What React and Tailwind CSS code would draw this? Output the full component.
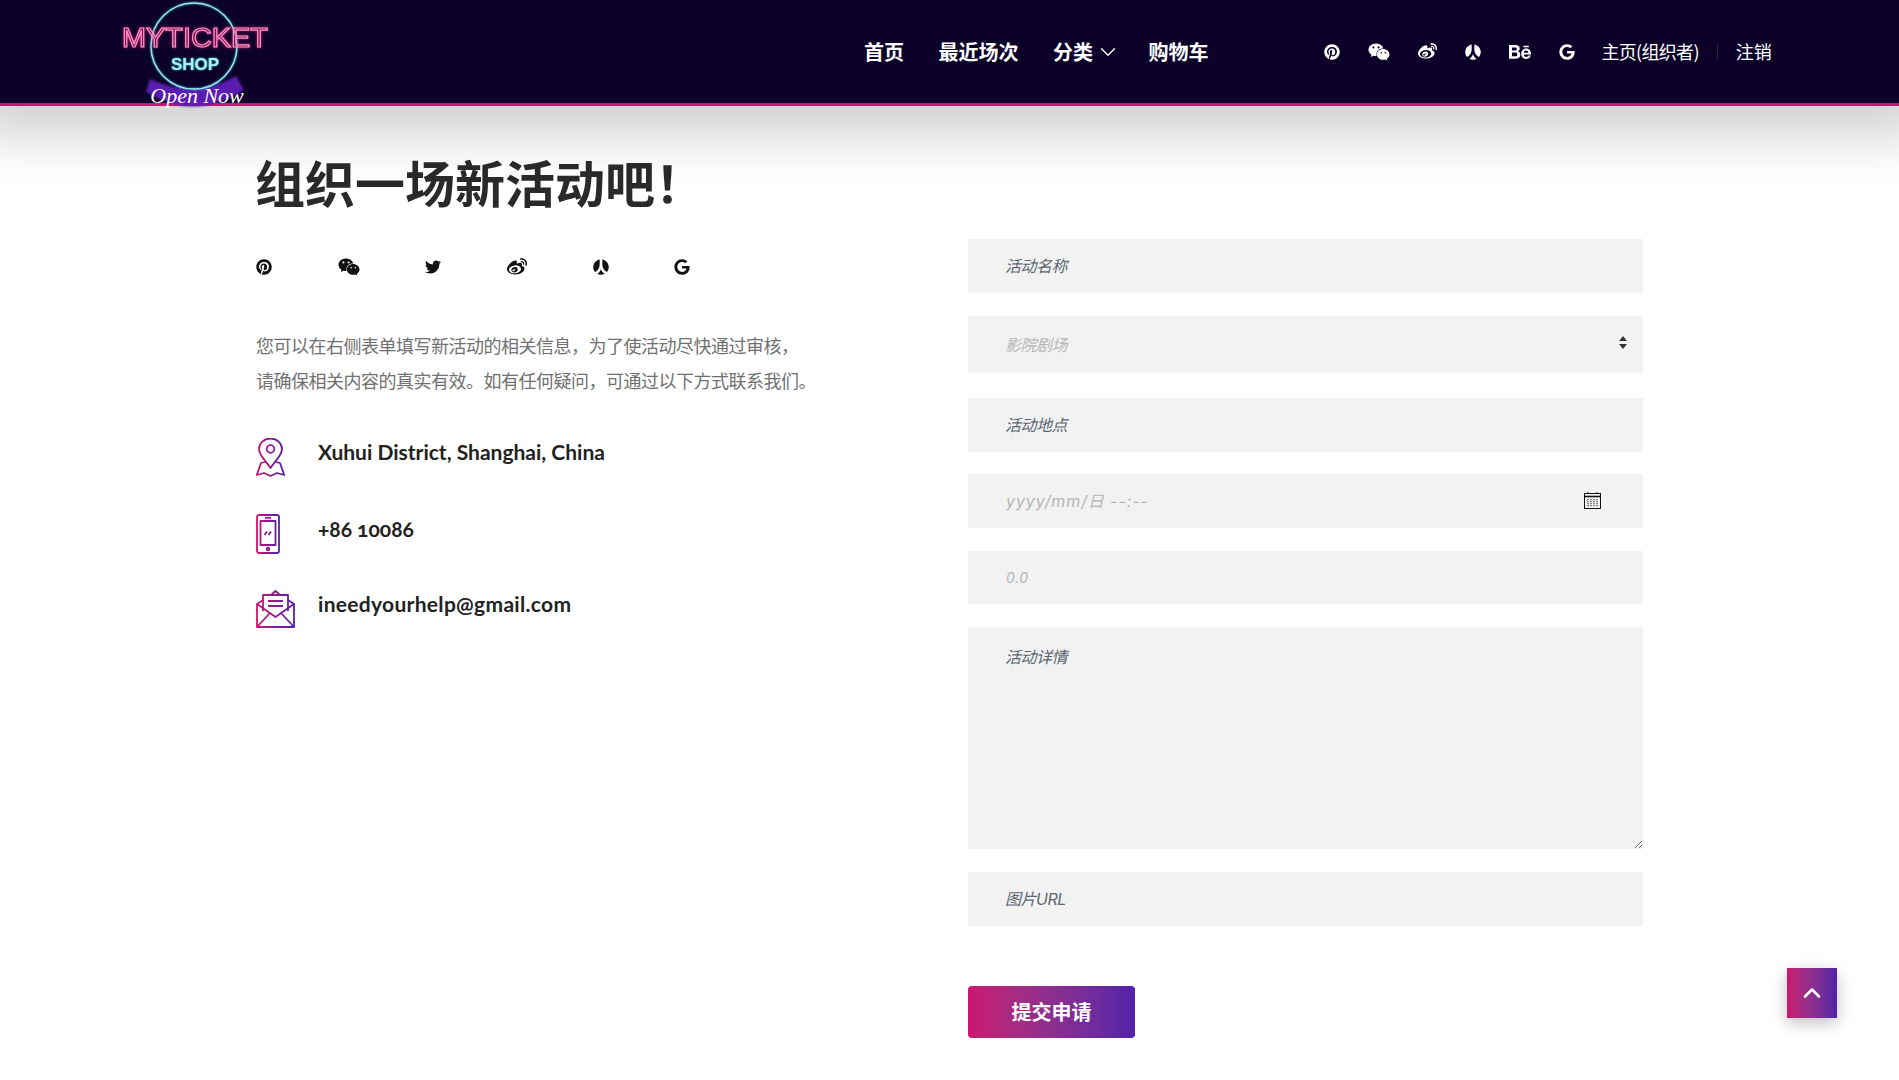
import { FaPinterest, FaWeixin, FaTwitter, FaWeibo, FaRenren, FaGoogle, FaBehance } from 'react-icons/fa'
import { ChevronDown, ChevronUp } from 'lucide-react'

const headerIcons = [
  { Icon: FaPinterest, size: 16 },
  { Icon: FaWeixin, size: 22 },
  { Icon: FaWeibo, size: 19 },
  { Icon: FaRenren, size: 16 },
  { Icon: FaBehance, size: 22 },
  { Icon: FaGoogle, size: 16 },
]

const socialIcons = [
  { Icon: FaPinterest, size: 16 },
  { Icon: FaWeixin, size: 22 },
  { Icon: FaTwitter, size: 16 },
  { Icon: FaWeibo, size: 20 },
  { Icon: FaRenren, size: 16 },
  { Icon: FaGoogle, size: 16 },
]

function Logo() {
  return (
    <svg width="150" height="110" viewBox="0 0 150 110" className="relative z-10 shrink-0">
      <defs>
        <filter id="pinkGlow" x="-20%" y="-40%" width="140%" height="180%">
          <feDropShadow dx="0" dy="0" stdDeviation="1.5" floodColor="#ff1f86" />
        </filter>
        <filter id="blueGlow" x="-20%" y="-20%" width="140%" height="140%">
          <feDropShadow dx="0" dy="0" stdDeviation="1.3" floodColor="#2fc8e0" />
        </filter>
        <filter id="soft" x="-20%" y="-40%" width="140%" height="180%">
          <feGaussianBlur stdDeviation="1.2" />
        </filter>
      </defs>
      <path d="M30 79 Q74 100 116 76 L124 90 Q74 122 26 92 Z" fill="#5a1fb0" filter="url(#soft)" />
      <circle cx="74" cy="46" r="43" fill="none" stroke="#9be6ee" strokeWidth="1.4" filter="url(#blueGlow)" />
      <text x="75" y="47" textAnchor="middle" textLength="146" lengthAdjust="spacingAndGlyphs" fontFamily="Liberation Sans, sans-serif" fontSize="28" fill="none" stroke="#ff8fc4" strokeWidth="1.2" filter="url(#pinkGlow)">MYTICKET</text>
      <text x="75" y="70" textAnchor="middle" fontFamily="Liberation Sans, sans-serif" fontWeight="700" fontSize="17" fill="#a8f0f5" filter="url(#blueGlow)">SHOP</text>
      <text x="77" y="103" textAnchor="middle" fontFamily="Liberation Serif, serif" fontStyle="italic" fontSize="22" fill="#ffffff">Open Now</text>
    </svg>
  )
}

function PinIcon() {
  return (
    <svg width="29" height="39" viewBox="0 0 29 39" fill="none" stroke="url(#pin2)" strokeWidth="1.8" strokeLinejoin="round">
      <defs>
        <linearGradient id="pin2" gradientUnits="userSpaceOnUse" x1="0" y1="0" x2="29" y2="0">
          <stop offset="0" stopColor="#cb1570" />
          <stop offset="1" stopColor="#5320a8" />
        </linearGradient>
      </defs>
      <path d="M14.5 30 C10 23 3 17.5 3 11 A11.5 10.5 0 0 1 26 11 C26 17.5 19 23 14.5 30 Z" />
      <circle cx="14.5" cy="11" r="3.8" />
      <path d="M9 24 L5 25 L0.8 37 L8 35 L14.5 38 L21 35 L28.2 37 L24 25 L20 24" />
    </svg>
  )
}

function PhoneIcon() {
  return (
    <svg width="24" height="40" viewBox="0 0 24 40" fill="none" stroke="url(#ph)" strokeWidth="1.8" strokeLinejoin="round">
      <defs>
        <linearGradient id="ph" gradientUnits="userSpaceOnUse" x1="0" y1="0" x2="24" y2="0">
          <stop offset="0" stopColor="#cb1570" />
          <stop offset="1" stopColor="#5320a8" />
        </linearGradient>
      </defs>
      <rect x="1" y="1" width="22" height="38" rx="2" />
      <rect x="4.5" y="7" width="15" height="24" />
      <path d="M9 3.8 H15" />
      <circle cx="12" cy="35" r="1.3" />
      <path d="M8.5 21 L11 17.5 M12.5 21 L15 17.5" />
    </svg>
  )
}

function MailIcon() {
  return (
    <svg width="39" height="38" viewBox="0 0 39 38" fill="none" stroke="url(#ml)" strokeWidth="1.8" strokeLinejoin="round">
      <defs>
        <linearGradient id="ml" gradientUnits="userSpaceOnUse" x1="0" y1="0" x2="39" y2="0">
          <stop offset="0" stopColor="#cb1570" />
          <stop offset="1" stopColor="#5320a8" />
        </linearGradient>
      </defs>
      <path d="M1 14 L7 10 M38 14 L32 10 M15 5 L19.5 1 L24 5" />
      <path d="M7 21 V5 H32 V21" />
      <path d="M12 11 H27 M12 16 H27" />
      <path d="M1 14 V37 H38 V14 L19.5 27 Z" />
      <path d="M1 37 L14 23 M38 37 L25 23" />
    </svg>
  )
}

function CalendarIcon() {
  return (
    <svg width="19" height="19" viewBox="0 0 19 19" fill="none" stroke="#111" strokeWidth="1">
      <rect x="1.5" y="2.5" width="16" height="15" />
      <path d="M1.5 5.5 H17.5" strokeWidth="1.6" />
      <path d="M5 1 V3 M14 1 V3" />
      <path d="M5 8 V16 M8 8 V16 M11 8 V16 M14 8 V16" strokeDasharray="1.2 0.8" />
    </svg>
  )
}

const fieldClass = "block w-full bg-[#f2f2f2] px-[37px] italic text-[16px] tracking-[-0.5px] font-['Inter','Noto_Sans_CJK_SC',sans-serif] outline-none"
const darkHolder = "placeholder:text-[#5c6670]"
const lightHolder = "placeholder:text-[#b5b5b5]"

function App() {
  return (
    <div className="min-h-[1080px] bg-white font-['Noto_Sans_CJK_SC',sans-serif]">
      <header className="h-[106px] bg-[#0c0229] border-b-[3px] border-[#c01874] flex items-start pl-[120px] shadow-[0_0_50px_29px_rgba(0,0,0,0.19)] relative">
        <Logo />
        <nav className="ml-[594px] h-[103px] flex items-center gap-[34.5px] text-white text-[20px] font-bold">
          <span>首页</span>
          <span>最近场次</span>
          <span className="flex items-center gap-[1.5px]">
            分类
            <ChevronDown size={26} strokeWidth={1.2} className="-mr-[6.5px]" />
          </span>
          <span>购物车</span>
        </nav>
        <div className="ml-[115px] h-[103px] flex items-center gap-[28px] text-white">
          {headerIcons.map(({ Icon, size }, i) => (
            <Icon key={i} size={size} />
          ))}
          <span className="text-[18px] tracking-[-0.7px] -ml-[1px]">主页(组织者)</span>
          <span className="w-px h-[15px] bg-[#2a2438] -mx-[10px]"></span>
          <span className="text-[18px]">注销</span>
        </div>
      </header>

      <main className="w-[1387px] mx-auto">
        <h1 className="pt-[40px] h-[133px] -ml-[1px] text-[50px] leading-[70px] font-bold text-[#2a2a2a]">组织一场新活动吧！</h1>
        <div className="flex">
          <div className="w-[712px] shrink-0">
            <div className="flex items-center gap-[65.7px] text-[#111] h-[24px] mt-[16px]">
              {socialIcons.map(({ Icon, size }, i) => (
                <Icon key={i} size={size} />
              ))}
            </div>
            <p className="mt-[49px] text-[18px] leading-[35px] tracking-[-0.5px] text-[#717171] whitespace-nowrap">
              您可以在右侧表单填写新活动的相关信息，为了使活动尽快通过审核，
              <br />
              请确保相关内容的真实有效。如有任何疑问，可通过以下方式联系我们。
            </p>
            <div className="mt-[40px] flex flex-col font-['Lato','Noto_Sans_CJK_SC',sans-serif] font-bold text-[21px] text-[#222]">
              <div className="flex items-start h-[76px]">
                <span className="w-[62px]"><PinIcon /></span>
                <span className="-mt-[2px]">Xuhui District, Shanghai, China</span>
              </div>
              <div className="flex items-start h-[76px]">
                <span className="w-[62px]"><PhoneIcon /></span>
                <span className="-mt-[1px] oldstyle-nums">+86 10086</span>
              </div>
              <div className="flex items-start">
                <span className="w-[62px]"><MailIcon /></span>
                <span className="-mt-[2px] tracking-[0.3px]">ineedyourhelp@gmail.com</span>
              </div>
            </div>
          </div>

          <form className="w-[675px] shrink-0 flex flex-col">
            <input className={`${fieldClass} ${darkHolder} h-[54px] mb-[23px]`} placeholder="活动名称" />
            <div className="relative mb-[25px]">
              <select className={`${fieldClass} h-[57px] appearance-none text-[#b5b5b5]`} defaultValue="">
                <option value="">影院剧场</option>
              </select>
              <svg width="10" height="14" viewBox="0 0 10 14" className="absolute right-[15px] top-[20px] fill-[#333]">
                <path d="M5 0 L9 5 H1 Z M1 8 H9 L5 13 Z" />
              </svg>
            </div>
            <input className={`${fieldClass} ${darkHolder} h-[54px] mb-[22px]`} placeholder="活动地点" />
            <div className="relative mb-[23px]">
              <input className={`${fieldClass} ${lightHolder} h-[54px] !pl-[38px] !tracking-[0.9px]`} placeholder="yyyy/mm/日 --:--" />
              <span className="absolute right-[41px] top-[17px]"><CalendarIcon /></span>
            </div>
            <input className={`${fieldClass} ${lightHolder} h-[53px] mb-[23px] !pl-[38px] !text-[14px] !tracking-[0.6px]`} placeholder="0.0" />
            <textarea className={`${fieldClass} ${darkHolder} h-[222px] mb-[23px] py-[18px] resize-y`} placeholder="活动详情" />
            <input className={`${fieldClass} ${darkHolder} h-[54px] mb-[60px]`} placeholder="图片URL" />
            <button type="button" className="w-[167px] h-[52px] rounded-[4px] bg-gradient-to-r from-[#cb1570] to-[#5320a8] text-white text-[20px] font-bold">
              提交申请
            </button>
          </form>
        </div>
      </main>

      <button type="button" className="fixed right-[62px] bottom-[62px] w-[50px] h-[50px] flex items-center justify-center text-white bg-gradient-to-r from-[#cb1570] to-[#5320a8] shadow-[0_5px_15px_rgba(0,0,0,0.25)]">
        <ChevronUp size={28} strokeWidth={2.2} />
      </button>
    </div>
  )
}

export default App
